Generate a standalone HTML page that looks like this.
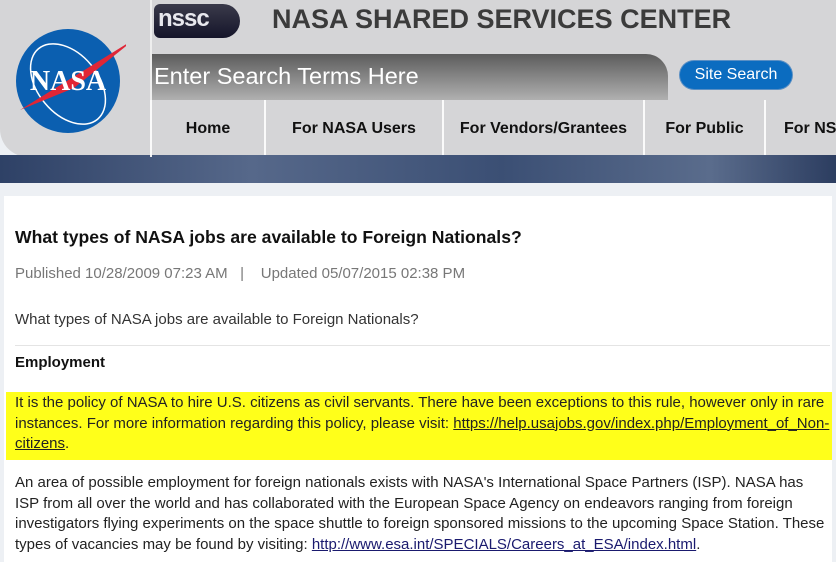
<!DOCTYPE html>
<html><head><style>
*{margin:0;padding:0;box-sizing:border-box}
body{width:836px;height:562px;overflow:hidden;background:#edf0f4;font-family:"Liberation Sans",Arial,sans-serif;position:relative}
.hdr{position:absolute;left:0;top:0;width:836px;height:157px;background:#d5d5d7;border-bottom-left-radius:28px}
.band{position:absolute;left:0;top:155px;width:836px;height:28px;background:linear-gradient(90deg,#2e4166,#56688a 30%,#3b4f74 60%,#5a6c8c 85%,#2c3d60)}
.logo{position:absolute;left:14px;top:24px}
.div{position:absolute;left:150px;top:0;width:2px;height:157px;background:#eee}
.nssc{position:absolute;left:154px;top:4px;width:86px;height:34px;background:linear-gradient(#3a3a4a,#15152a);border-radius:6px 17px 17px 6px;color:#e8e8ee;font:bold 24px "Liberation Sans",sans-serif;line-height:30px;padding-left:4px;letter-spacing:-1px}
.title{position:absolute;left:272px;top:4px;font-size:27px;font-weight:bold;color:#3b3b3b;white-space:nowrap}
.search{position:absolute;left:152px;top:54px;width:516px;height:46px;background:linear-gradient(#5c5c5c,#b0b0b0);border-top-right-radius:22px;color:#fff;font-size:23.5px;padding:9px 0 0 2px}
.btn{position:absolute;left:680px;top:61px;width:112px;height:28px;background:#0b6cc0;border-radius:14px;color:#fff;font-size:16px;text-align:center;line-height:28px;box-shadow:0 0 0 1px #5a8fc4}
.nav{position:absolute;top:100px;height:55px;font-size:16px;font-weight:bold;color:#111;text-align:center;line-height:57px;border-left:2px solid #fafafa;white-space:nowrap;overflow:hidden}
.card{position:absolute;left:4px;top:196px;width:828px;height:366px;background:#fff}
.t{position:absolute;left:15px;color:#222;font-size:15px;white-space:nowrap}
.hl{position:absolute;left:6px;top:392px;width:826px;height:68px;background:#ffff1a}
a{color:#222;text-decoration:underline}
.p{position:absolute;left:15px;width:818px;font-size:15px;line-height:20.7px;color:#222}
</style></head><body>
<div class="hdr"></div>
<div class="band"></div>
<svg class="logo" width="112" height="112" viewBox="0 0 112 112">
<circle cx="54" cy="57" r="52" fill="#0b5fb0"/>
<ellipse cx="54" cy="60" rx="30" ry="46" fill="none" stroke="#fff" stroke-width="1.5" transform="rotate(-40 54 60)"/>
<path d="M6 86 L122 14 L60 64 Z" fill="#e02636"/>
<text x="54" y="66" text-anchor="middle" font-family="Liberation Serif,serif" font-weight="bold" font-size="28" fill="#fff">NASA</text>
</svg>
<div class="div"></div>
<div class="nssc">nssc</div>
<div class="title">NASA SHARED SERVICES CENTER</div>
<div class="search">Enter Search Terms Here</div>
<div class="btn">Site Search</div>
<div class="nav" style="left:150px;width:114px">Home</div>
<div class="nav" style="left:264px;width:178px">For NASA Users</div>
<div class="nav" style="left:442px;width:201px">For Vendors/Grantees</div>
<div class="nav" style="left:643px;width:121px">For Public</div>
<div class="nav" style="left:764px;width:72px;text-align:left;padding-left:18px">For NSSC</div>
<div class="card"></div>
<div class="t" style="top:227px;font-size:17.6px;font-weight:bold;color:#111">What types of NASA jobs are available to Foreign Nationals?</div>
<div class="t" style="top:265px;color:#777">Published 10/28/2009 07:23 AM &nbsp;&nbsp;|&nbsp;&nbsp;&nbsp; Updated 05/07/2015 02:38 PM</div>
<div class="t" style="top:311px;color:#333">What types of NASA jobs are available to Foreign Nationals?</div>
<div style="position:absolute;left:15px;top:345px;width:815px;height:1px;background:#e4e4e4"></div>
<div class="t" style="top:354px;font-weight:bold;color:#111">Employment</div>
<div class="hl"></div>
<div class="p" style="top:393px">It is the policy of NASA to hire U.S. citizens as civil servants. There have been exceptions to this rule, however only in rare instances. For more information regarding this policy, please visit: <a>https://help.usajobs.gov/index.php/Employment_of_Non-citizens</a>.</div>
<div class="p" style="top:473px;width:812px">An area of possible employment for foreign nationals exists with NASA's International Space Partners (ISP). NASA has ISP from all over the world and has collaborated with the European Space Agency on endeavors ranging from foreign investigators flying experiments on the space shuttle to foreign sponsored missions to the upcoming Space Station. These types of vacancies may be found by visiting: <a style="color:#1a1a6e">http://www.esa.int/SPECIALS/Careers_at_ESA/index.html</a>.</div>
</body></html>
